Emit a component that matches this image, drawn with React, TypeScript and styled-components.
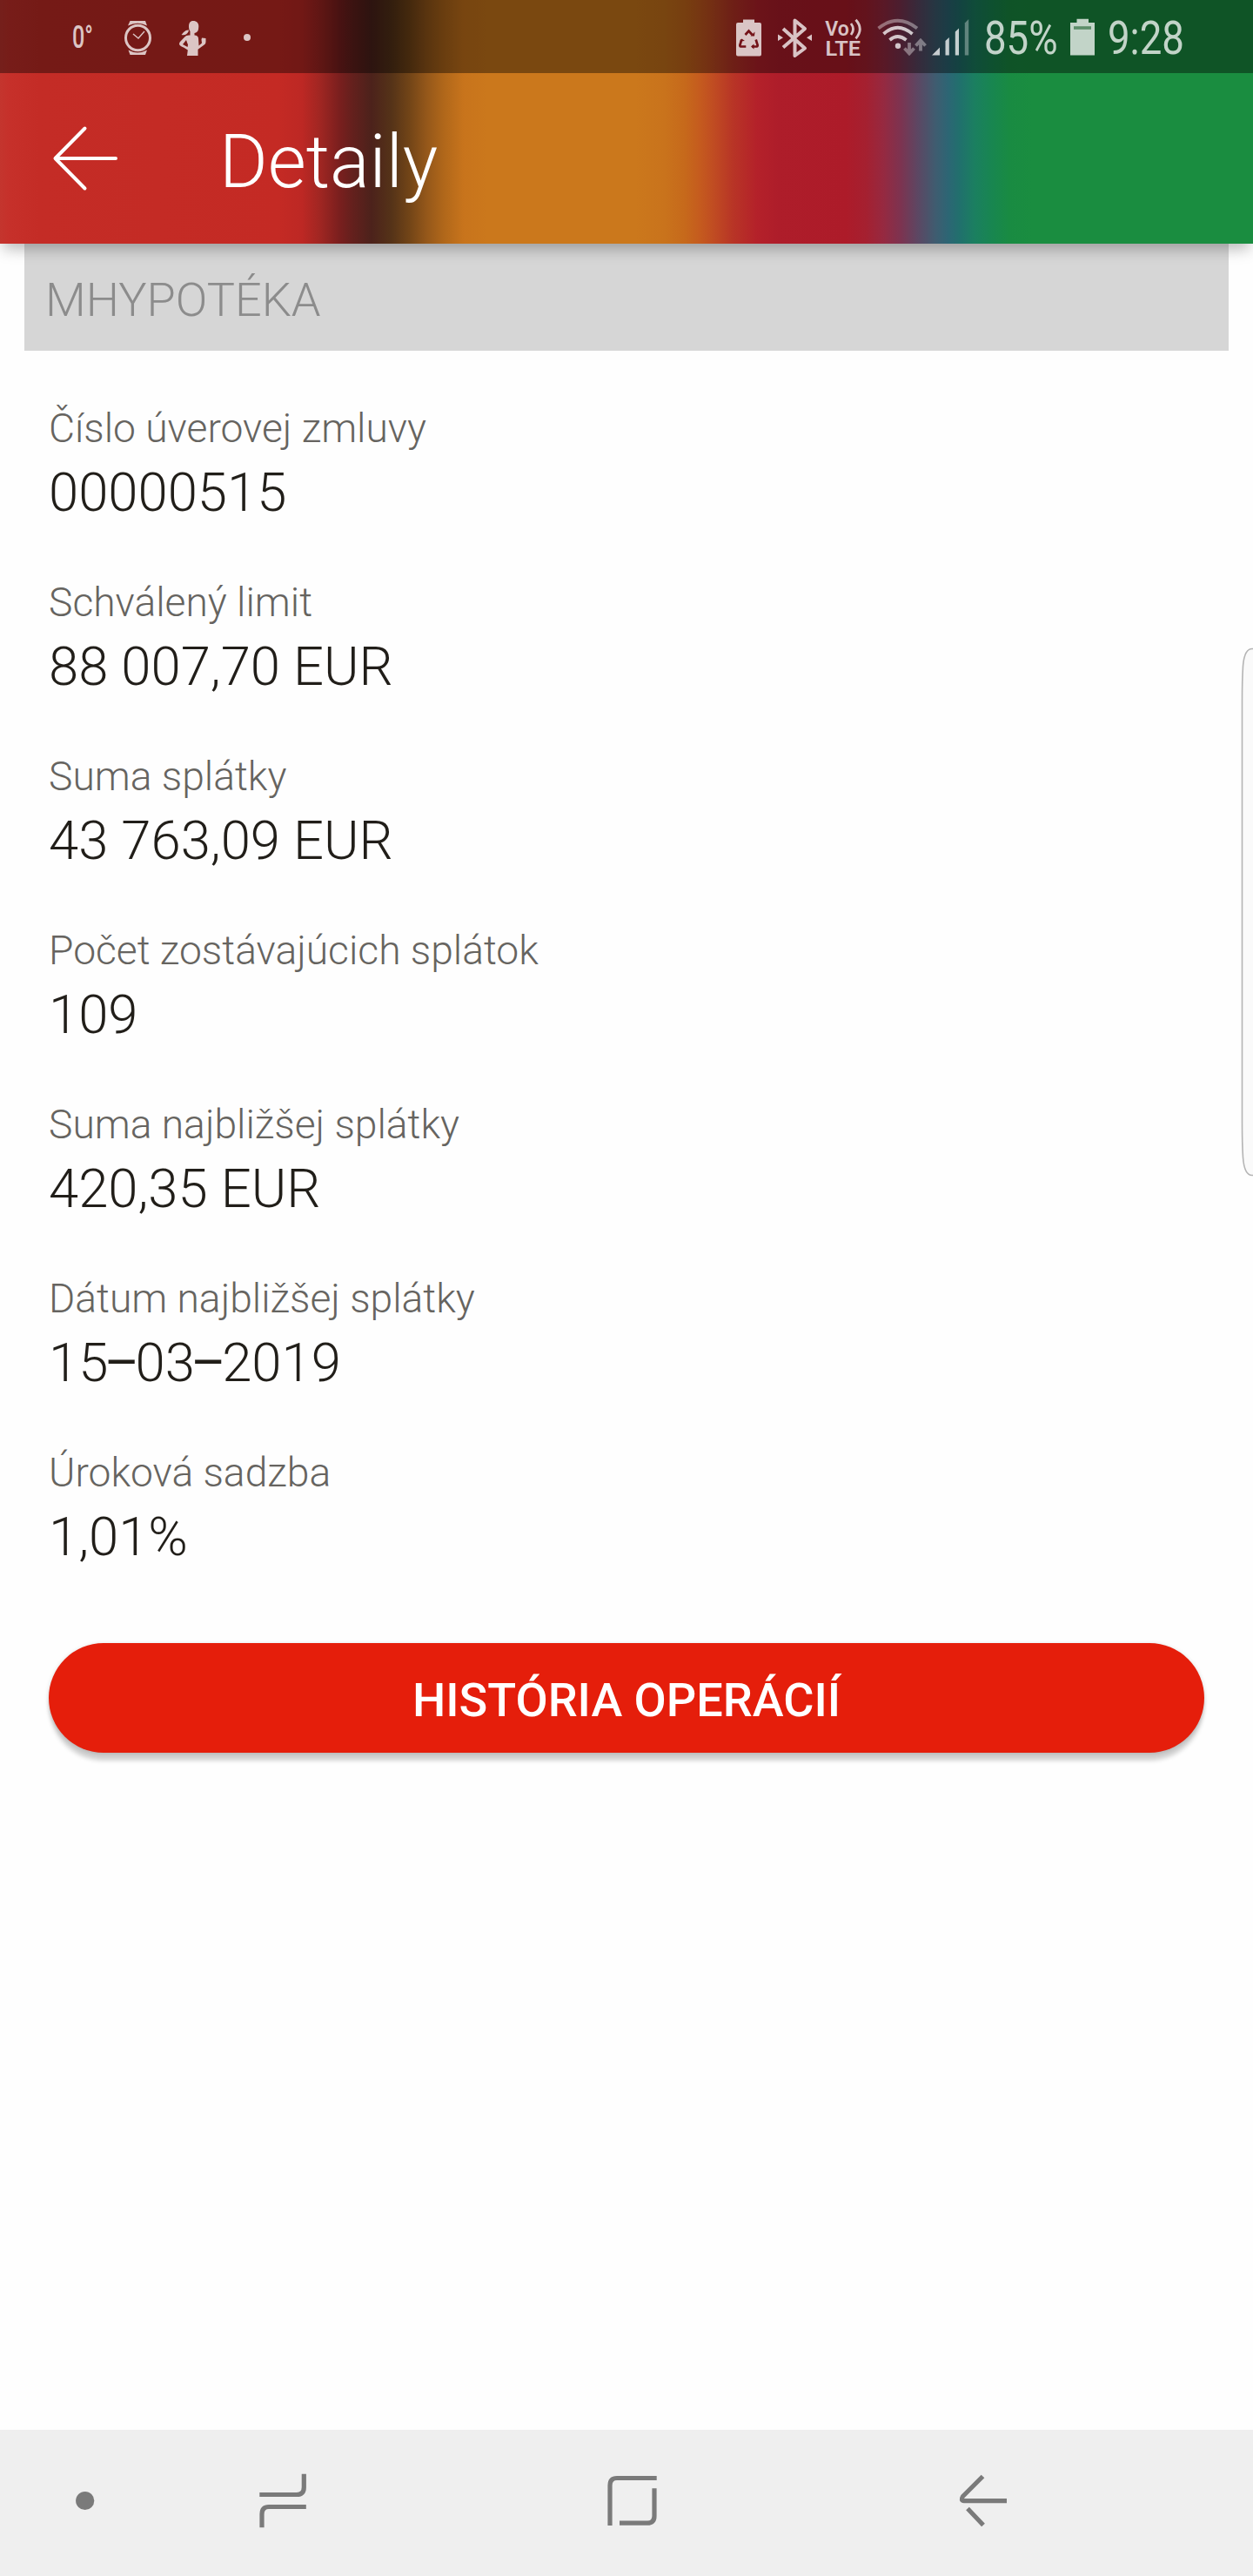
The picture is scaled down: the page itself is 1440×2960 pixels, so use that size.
import React from 'react';
import styled, { createGlobalStyle } from 'styled-components';

const GlobalStyle = createGlobalStyle`
  *, *::before, *::after { box-sizing: border-box; }
  html, body { margin: 0; padding: 0; background: #fefefe; }
  body { font-family: Roboto, "Noto Sans", sans-serif; }
`;

const Screen = styled.div`
  width: 1440px;
  height: 2960px;
  display: flex;
  flex-direction: column;
  background: #fefefe;
  position: relative;
  overflow: hidden;
`;

const Header = styled.header`
  flex: none;
  height: 280px;
  position: relative;
  z-index: 1;
  background: linear-gradient(
    90deg,
    #c4352e 0, #c6302a 12px, #c42c26 45px, #c42a24 320px, #bd2824 347px,
    #a02622 368px, #7a1f1e 390px, #64201d 405px, #4c221b 427px, #553318 450px,
    #714417 470px, #94571a 490px, #b0671a 510px, #c8741c 533px, #cb781c 560px,
    #cb781c 730px, #c9731c 764px, #c6691b 787px, #c55c1e 803px, #c04c22 820px,
    #b83526 842px, #b4212a 870px, #ae1d2a 895px, #ad1b29 972px, #a52030 995px,
    #962940 1015px, #7d3350 1035px, #5c4763 1055px, #3f5c70 1075px,
    #2c6674 1090px, #20716c 1104px, #1b7f60 1120px, #188650 1140px,
    #198b42 1160px, #1a8d40 1185px, #1a8d40 1440px
  );
  box-shadow: 0 10px 16px -4px rgba(0, 0, 0, 0.28);
`;

const StatusBar = styled.div`
  height: 84px;
  display: flex;
  align-items: flex-start;
  background: rgba(0, 0, 0, 0.4);
  color: rgba(255, 255, 255, 0.75);
`;

const Spacer = styled.div`
  flex: 1;
`;

const StatusIcon = styled.svg<{ $gap: number }>`
  flex: none;
  display: block;
  margin-left: ${(p) => p.$gap}px;
`;

const StatusText = styled.div<{ $width: number; $gap: number; $size: number; $stretch: number; $top: number; $weight?: number }>`
  flex: none;
  width: ${(p) => p.$width}px;
  margin-left: ${(p) => p.$gap}px;
  padding-top: ${(p) => p.$top}px;
  font-size: ${(p) => p.$size}px;
  font-weight: ${(p) => p.$weight ?? 400};
  line-height: 60px;
  white-space: nowrap;
  span {
    display: inline-block;
    transform: scaleX(${(p) => p.$stretch});
    transform-origin: 0 50%;
  }
`;

const AppBar = styled.div`
  height: 196px;
  display: flex;
  align-items: center;
  padding-left: 56px;
`;

const BackButton = styled.button`
  border: 0;
  padding: 0;
  background: none;
  width: 84px;
  height: 84px;
  margin-right: 112px;
  svg { display: block; }
`;

const Title = styled.h1`
  margin: 8px 0 0;
  font-size: 85px;
  line-height: 100px;
  font-weight: 300;
  color: #fff;
`;

const SectionHeader = styled.h2`
  flex: none;
  margin: 0 28px;
  height: 123px;
  padding: 5px 0 0 24px;
  display: flex;
  align-items: center;
  background: #d6d6d6;
  color: #8c8c8c;
  font-size: 54px;
  font-weight: 300;
`;

const Content = styled.main`
  flex: 1;
  padding: 59px 56px 0;
  display: flex;
  flex-direction: column;
`;

const DetailList = styled.dl`
  margin: 0 0 86px;
  display: flex;
  flex-direction: column;
  gap: 60px;
`;

const Detail = styled.div`
  display: flex;
  flex-direction: column;
  gap: 8px;
`;

const Label = styled.dt`
  font-size: 46.2px;
  line-height: 60px;
  font-weight: 300;
  color: #666460;
`;

const Value = styled.dd`
  margin: 0;
  font-size: 61.6px;
  line-height: 72px;
  font-weight: 300;
  color: #211e19;
`;

const Dash = styled.span`
  margin: 0 -4.6px;
  font-weight: 400;
`;

const HistoryButton = styled.button`
  flex: none;
  height: 126px;
  border: 0;
  border-radius: 63px;
  padding: 4px 0 0;
  background: #e51e0b;
  color: #fff;
  font: 500 54px Roboto, "Noto Sans", sans-serif;
  box-shadow: 0 10px 5px -1px rgba(0, 0, 0, 0.18), 0 1px 5px rgba(0, 0, 0, 0.16);
`;

const EdgeHandle = styled.svg`
  position: absolute;
  right: 0;
  top: 740px;
`;

const NavBar = styled.nav`
  flex: none;
  height: 168px;
  background: #efefef;
  display: flex;
  align-items: flex-start;
  padding-top: 48px;
  padding-left: 82px;
`;

const NavIcon = styled.svg<{ $gap?: number }>`
  flex: none;
  display: block;
  margin-right: ${(p) => p.$gap ?? 0}px;
  fill: none;
  stroke: #7a7a7a;
  stroke-width: 5.2;
`;

const details = [
  { label: 'Číslo úverovej zmluvy', value: '00000515' },
  { label: 'Schválený limit', value: '88 007,70 EUR' },
  { label: 'Suma splátky', value: '43 763,09 EUR' },
  { label: 'Počet zostávajúcich splátok', value: '109' },
  { label: 'Suma najbližšej splátky', value: '420,35 EUR' },
  { label: 'Dátum najbližšej splátky', value: <>15<Dash>–</Dash>03<Dash>–</Dash>2019</> },
  { label: 'Úroková sadzba', value: '1,01%' },
];

const StatusIcons = () => (
  <StatusBar>
    <StatusText $gap={83} $width={24} $size={37} $stretch={0.68} $top={13} $weight={500}><span>0°</span></StatusText>
    {/* watch */}
    <StatusIcon $gap={35} width={32} height={84} viewBox="142 0 32 84" fill="none" stroke="currentColor">
      <path d="M149.500 24H167l2 5.500q-10.500-5.500-22 0ZM147.500 57.500q10.500 6 21.500 0l-2 5.500H149.500Z" fill="currentColor" stroke="none" />
      <ellipse cx="158.500" cy="43.500" rx="14" ry="14.300" strokeWidth="3" />
      <path d="M153 39l6 5 7-8" strokeWidth="1.400" />
    </StatusIcon>
    {/* runner */}
    <StatusIcon $gap={30} width={34} height={84} viewBox="204 0 34 84" fill="currentColor">
      <path d="M222 24c4 0 6.500 2.500 6.300 6.500l-.3 3c-.3 2.500-2 4.300-4.500 4.500v2.500c2.800.3 4.200 1.200 4.500 3.500l.5 8.500 3.500-3-.5-4 .5-2 4.500 .5V48c0 2-1 3-2.500 4l-6.500 4.800V64h-12.500l.8-6.500L211 54.500c-2.500-1-5-2.300-5-4 0-1 .7-2.200 1.700-3.200l4.300-4.500c1.500-1.600 3-2.300 5-2.300h1.500V36c-1-1-1.500-3.500-1.500-5.500 0-4 1.500-6.500 5-6.500ZM214 46l-4 5 5.500 3 .5-2.500Z" fillRule="evenodd" />
      <path d="M217 34.500c-4-.5-6.500 3-8.500 5.500 4 .8 6.500-.5 8-3.500Z" />
    </StatusIcon>
    <StatusIcon $gap={42} width={8} height={84} viewBox="280 0 8 84">
      <circle cx="284" cy="43" r="4" fill="currentColor" />
    </StatusIcon>
    <Spacer />
    {/* battery saver with the recycling mark cut out */}
    <StatusIcon $gap={0} width={30} height={84} viewBox="846 0 30 84">
      <path d="M854 22.500h13V26h6q2 0 2 2v34.500q0 2-2 2H848q-2 0-2-2V28q0-2 2-2h6Z" fill="currentColor" />
      <g fill="none" stroke="#731218" strokeWidth="2.700">
        <path d="M856.500 40l4-4.500 4 4.500M852.300 45.500l-2 6.500q0 1.500 2 1.500h5M868.700 45.500l2 6.500q0 1.500-2 1.500h-4.500" />
        <path d="M862.500 41.500h4.500l.5-5ZM850 47.500l2.500-3 3.500 2.500ZM866.500 50.500l-3.500 3 3.500 3Z" fill="#731218" stroke="none" />
      </g>
    </StatusIcon>
    <StatusIcon $gap={17} width={42} height={84} viewBox="893 0 42 84">
      <path d="M900 33l25 22.500-11.500 8.500V23.500L925 33l-25 21.500" fill="none" stroke="currentColor" strokeWidth="4" strokeLinejoin="round" />
      <path d="M894 39.500l6 3.800-6 3.800ZM933 39.500l-6 3.800 6 3.800Z" fill="currentColor" />
    </StatusIcon>
    {/* VoLTE */}
    <StatusIcon $gap={13} width={44} height={84} viewBox="948 0 44 84" fill="currentColor">
      <text x="948.300" y="40.700" fontSize="23.500" fontWeight="600" textLength="27.500" lengthAdjust="spacingAndGlyphs">Vo</text>
      <text x="948.500" y="63.800" fontSize="23.500" fontWeight="600" textLength="40.500" lengthAdjust="spacingAndGlyphs">LTE</text>
      <path d="M978 27q5 6.500 0 13M983.500 22.800q9.500 10.700 0 21.400" fill="none" stroke="currentColor" strokeWidth="2.800" />
    </StatusIcon>
    {/* wifi with traffic arrows */}
    <StatusIcon $gap={16} width={57} height={84} viewBox="1008 0 57 84" fill="none" stroke="currentColor" strokeWidth="3.800">
      <path d="M1009.500 32.500q22-17.500 44.500 0M1045 49v11.500M1039.500 55.500l5.500 6 5.500-6M1058 58.500V47M1052.500 52.500l5.500-6 5.500 6" opacity=".5" />
      <path d="M1015.500 39q16-14.500 33 0M1022.500 46q9-8 19 0" />
      <circle cx="1032" cy="52.700" r="3.200" fill="currentColor" stroke="none" />
    </StatusIcon>
    <StatusIcon $gap={6} width={43} height={84} viewBox="1071 0 43 84" fill="currentColor">
      <path d="M1071 63.500l9-9v9ZM1086.500 47l4.300-4v20.500h-4.300ZM1097.800 36.500l4.200-4v31h-4.200Z" />
      <path d="M1108.800 26.500l4.400-4.500v41.500h-4.400Z" opacity=".45" />
    </StatusIcon>
    <StatusText $gap={17} $width={84} $size={53} $stretch={0.86} $top={14}><span>85%</span></StatusText>
    <StatusIcon $gap={15} width={28} height={84} viewBox="1230 0 28 84">
      <path d="M1237.500 21.700h13.500V26h7v37.500h-28V26h7.500Z" fill="currentColor" />
      <path d="M1234 30.200h20v3.600h-20Z" fill="#5b8d69" />
    </StatusIcon>
    <StatusText $gap={15} $width={167} $size={53} $stretch={0.86} $top={14}><span>9:28</span></StatusText>
  </StatusBar>
);

export default function App() {
  return (
    <>
      <GlobalStyle />
      <Screen>
        <Header>
          <StatusIcons />
          <AppBar>
            <BackButton aria-label="Späť">
              <svg width="84" height="84" viewBox="56 140 84 84" fill="none" stroke="#fff" strokeWidth="4" strokeLinecap="round" strokeLinejoin="round">
                <path d="M97.500 147.500L63.500 182l34 34.500M64 182h69" />
              </svg>
            </BackButton>
            <Title>Detaily</Title>
          </AppBar>
        </Header>
        <SectionHeader>MHYPOTÉKA</SectionHeader>
        <Content>
          <DetailList>
            {details.map((d) => (
              <Detail key={d.label}>
                <Label>{d.label}</Label>
                <Value>{d.value}</Value>
              </Detail>
            ))}
          </DetailList>
          <HistoryButton>HISTÓRIA OPERÁCIÍ</HistoryButton>
        </Content>
        <EdgeHandle width="16" height="620" viewBox="1424 740 16 620">
          <path d="M1442 745.500h-3q-9 0-10.500 20-1 16-1 40V1290q0 24 1 40 1.500 20.500 10.500 20.500h3" fill="#fafafa" stroke="#b4b4b4" strokeWidth="1.600" />
        </EdgeHandle>
        <NavBar>
          <NavIcon $gap={180} width="32" height="72" viewBox="82 2840 32 72">
            <circle cx="97.700" cy="2873.500" r="10.600" fill="#7a7a7a" stroke="none" />
          </NavIcon>
          <NavIcon $gap={346} width="58" height="72" viewBox="294 2840 58 72">
            <path d="M298.300 2866.500H341q8.300 0 8.300-8.500V2842.800M351.800 2880.500H309q-8 0-8 8.500v15.200" />
          </NavIcon>
          <NavIcon $gap={346} width="58" height="72" viewBox="698 2840 58 72">
            <path d="M701 2902v-46q0-8.500 8-8.500h45.700M752 2859.200V2891q0 8.200-8 8.200H712" />
          </NavIcon>
          <NavIcon width="60" height="72" viewBox="1102 2840 60 72">
            <path d="M1129.500 2845.500L1106.500 2868.500q-3 5 1.500 5.200h49M1112 2882.500l18 19" />
          </NavIcon>
        </NavBar>
      </Screen>
    </>
  );
}
